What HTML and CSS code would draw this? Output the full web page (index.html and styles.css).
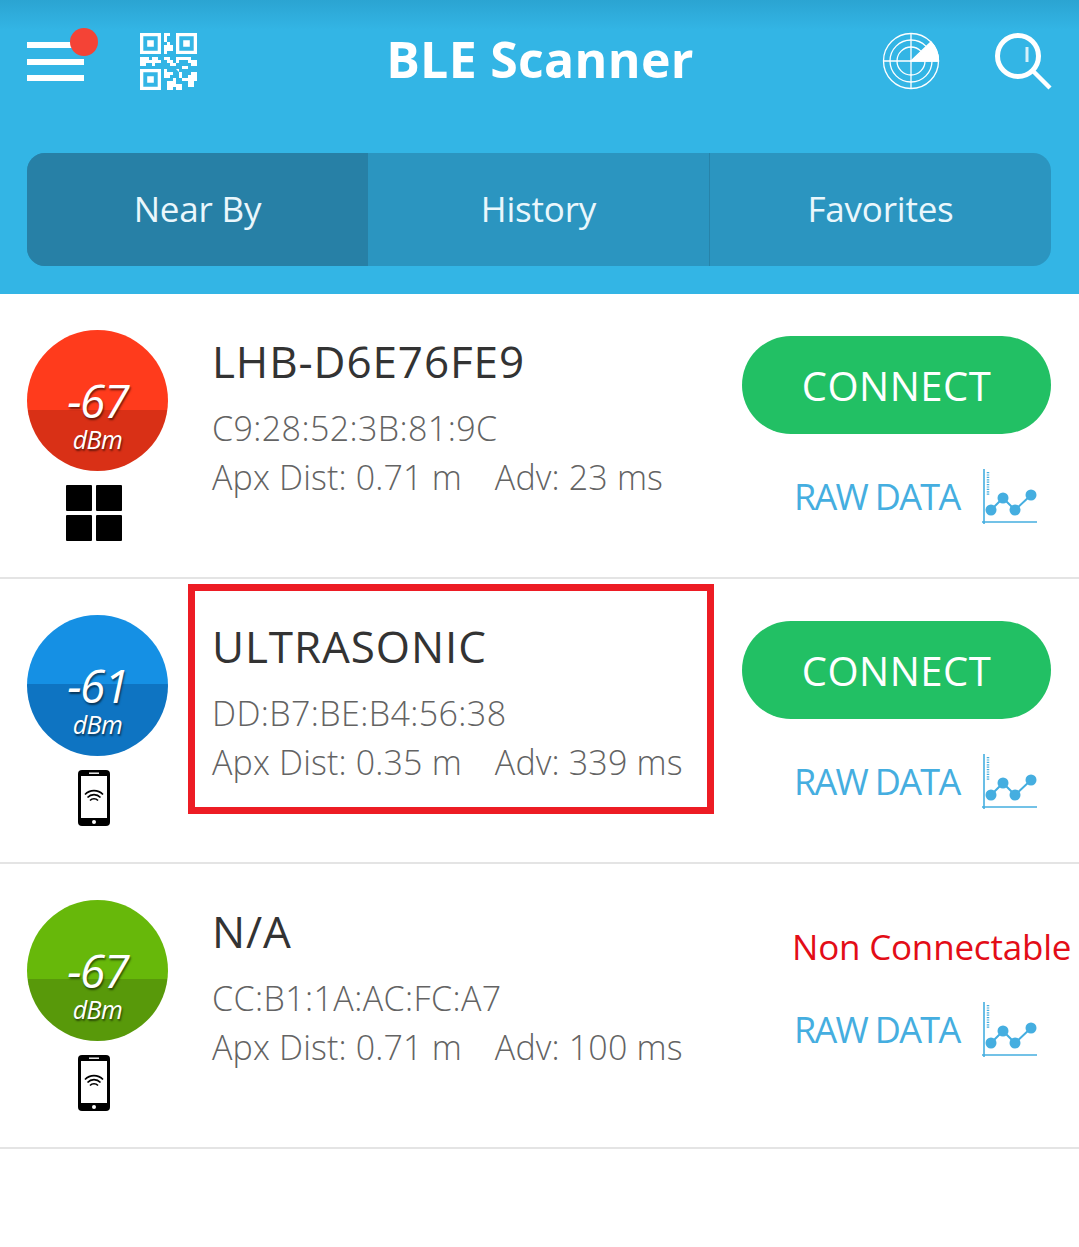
FILE: index.html

```html
<!DOCTYPE html>
<html lang="en">
<head>
  <meta charset="UTF-8">
  <meta name="viewport" content="width=device-width, initial-scale=1.0">
  <title>BLE Scanner</title>
  <link rel="stylesheet" href="styles.css">
</head>
<body>
  <svg class="defs" width="0" height="0">
    <symbol id="chart" viewBox="0 0 56 56">
      <path d="M3 0V55M1 53H56" stroke="#45aee0" stroke-width="1.6" fill="none"/>
      <path d="M7 3V26" stroke="#45aee0" stroke-width="2.5" stroke-dasharray="1.2 1.2" fill="none"/>
      <path d="M10 41L22 29L34 41L50 26" stroke="#45aee0" stroke-width="2" fill="none"/>
      <circle cx="10" cy="41" r="5.5" fill="#45aee0"/>
      <circle cx="22" cy="29" r="5.5" fill="#45aee0"/>
      <circle cx="34" cy="41" r="5.5" fill="#45aee0"/>
      <circle cx="50" cy="26" r="5.5" fill="#45aee0"/>
    </symbol>
    <symbol id="phone" viewBox="0 0 32 56">
      <rect width="32" height="56" rx="4" fill="#000"/>
      <rect x="3" y="6" width="26" height="42" fill="#fff"/>
      <rect x="11" y="2.5" width="10" height="1.4" fill="#fff"/>
      <circle cx="16" cy="52" r="2" fill="#fff"/>
      <path d="M7 24.5a12.5 12.5 0 0 1 18 0M9.5 27.5a9 9 0 0 1 13 0M12 30.5a5.500 5.500 0 0 1 8 0" stroke="#000" stroke-width="1.700" fill="none"/>
    </symbol>
  </svg>

  <header class="header">
    <div class="toolbar">
      <div class="menu-btn">
        <span class="bar"></span><span class="bar"></span><span class="bar"></span>
        <span class="dot"></span>
      </div>
      <svg class="qr" width="57" height="57" viewBox="0 0 19 19" fill="#fff">
        <path fill-rule="evenodd" d="M0 0h7v7H0zM1.100 1.100v4.800h4.800V1.100zM12 0h7v7h-7zM13.100 1.100v4.800h4.800V1.100zM0 12h7v7H0zM1.100 13.100v4.800h4.800v-4.800z"/>
        <path d="M2.400 2.400h2.200v2.200H2.400zM14.400 2.400h2.200v2.200h-2.200zM2.400 14.400h2.200v2.200H2.400z"/>
        <path d="M8 0h2v1H9v2h1v1h1v2H9v1H8V4h1V3H8zM0 8h3v1h1V8h2v1h1v1H5v1H4v-1H2v1H0zM8 8h2v1h1v1h1v1h-2v-1H9v-1H8zM12 8h5v1h2v2h-3v1h-2v-1h3v-1h-1V9h-3v1h-1zM8 12h1v1h2v1h-1v1H8zM12 12h1v1h1v2h2v-1h1v-1h2v3h-1v2h-2v-2h-2v-1h-1v-2zM9 16h2v-1h1v2h2v2h-2v-1h-1v1H9z"/>
      </svg>
      <h1 class="title">BLE Scanner</h1>
      <svg class="radar" width="58" height="58" viewBox="0 0 58 58" fill="none" stroke="#fff" stroke-width="1.300">
        <circle cx="29" cy="29" r="27.500"/>
        <circle cx="29" cy="29" r="21"/>
        <circle cx="29" cy="29" r="14"/>
        <path d="M29 1V57M1 29H57"/>
        <path d="M29 29L49 10A27.500 27.500 0 0 1 56.500 29Z" fill="#fff"/>
      </svg>
      <svg class="search" width="58" height="58" viewBox="0 0 58 58" fill="none" stroke="#fff">
        <circle cx="24" cy="24" r="20.500" stroke-width="5"/>
        <path d="M39 39L56 56" stroke-width="4.500"/>
        <path d="M33 15V30" stroke-width="3" opacity=".8"/>
      </svg>
    </div>
    <nav class="tabs">
      <div class="tab active">Near By</div>
      <div class="tab">History</div>
      <div class="tab last">Favorites</div>
    </nav>
  </header>

  <main>
    <section class="row">
      <div class="signal">
        <div class="rssi red"><span class="num">-67</span><span class="unit">dBm</span></div>
        <div class="win"><i></i><i></i><i></i><i></i></div>
      </div>
      <div class="info">
        <div class="name">LHB-D6E76FE9</div>
        <div class="addr">C9:28:52:3B:81:9C</div>
        <div class="meta"><span>Apx Dist: 0.71 m</span><span>Adv: 23 ms</span></div>
      </div>
      <div class="actions">
        <button class="connect">CONNECT</button>
        <div class="raw">RAW DATA <svg class="chart"><use href="#chart"/></svg></div>
      </div>
    </section>

    <section class="row">
      <div class="signal">
        <div class="rssi blue"><span class="num">-61</span><span class="unit">dBm</span></div>
        <svg class="phone"><use href="#phone"/></svg>
      </div>
      <div class="info">
        <div class="name">ULTRASONIC</div>
        <div class="addr">DD:B7:BE:B4:56:38</div>
        <div class="meta"><span>Apx Dist: 0.35 m</span><span>Adv: 339 ms</span></div>
      </div>
      <div class="actions">
        <button class="connect">CONNECT</button>
        <div class="raw">RAW DATA <svg class="chart"><use href="#chart"/></svg></div>
      </div>
      <div class="highlight"></div>
    </section>

    <section class="row">
      <div class="signal">
        <div class="rssi green"><span class="num">-67</span><span class="unit">dBm</span></div>
        <svg class="phone"><use href="#phone"/></svg>
      </div>
      <div class="info">
        <div class="name">N/A</div>
        <div class="addr">CC:B1:1A:AC:FC:A7</div>
        <div class="meta"><span>Apx Dist: 0.71 m</span><span>Adv: 100 ms</span></div>
      </div>
      <div class="actions">
        <div class="non-conn">Non Connectable</div>
        <div class="raw">RAW DATA <svg class="chart"><use href="#chart"/></svg></div>
      </div>
    </section>
  </main>
</body>
</html>
```

FILE: styles.css

```css
* {
  box-sizing: border-box;
}
body {
  margin: 0;
  font-family: "Open Sans", "Noto Sans", sans-serif;
  background-color: #fff;
  overflow: hidden;
}
.defs {
  position: absolute;
}
.header {
  height: 294px;
  padding: 31px 28px 0 27px;
  background: linear-gradient(#2ba4d2, #33b5e5 30px);
}
.toolbar {
  display: flex;
  align-items: flex-start;
  height: 122px;
}
.menu-btn {
  position: relative;
  width: 57px;
  padding-top: 11px;
  margin-right: 56px;
}
.bar {
  display: block;
  height: 6px;
  margin-bottom: 10.500px;
  background: #fff;
}
.dot {
  position: absolute;
  top: -3px;
  left: 43px;
  width: 28px;
  height: 28px;
  border-radius: 50%;
  background: #f44336;
}
.qr {
  margin: 2px 1px 0 0;
}
.title {
  flex: 1;
  margin: -3px 0 0;
  color: #fff;
  font-size: 50px;
  line-height: 62px;
  font-weight: 700;
  letter-spacing: 0.300px;
  text-align: center;
}
.radar {
  margin: 1px 54px 0 0;
}
.search {
  margin-top: 1px;
  margin-right: -1px;
}
.tabs {
  display: grid;
  grid-template-columns: 341px 341px 342px;
  height: 113px;
  border-radius: 18px;
  overflow: hidden;
  background: #2b95c0;
}
.tab {
  display: flex;
  align-items: center;
  justify-content: center;
  padding-bottom: 2px;
  color: #eaf7fc;
  font-size: 35px;
  font-weight: 400;
  letter-spacing: -0.200px;
}
.tab.active {
  background: #2780a6;
}
.tab.last {
  border-left: 1px solid #2783a9;
}
.row {
  position: relative;
  display: flex;
  height: 285px;
  padding: 36px 28px 0 27px;
  border-bottom: 2px solid #e4e4e4;
}
.signal {
  display: flex;
  flex-direction: column;
  align-items: center;
  width: 141px;
  margin-right: 44px;
}
.rssi {
  display: flex;
  flex-direction: column;
  align-items: center;
  width: 141px;
  height: 141px;
  border-radius: 50%;
  color: #fff;
  font-style: italic;
  text-shadow: 1px 2px 2px rgba(0, 0, 0, .55);
  padding-top: 45px;
}
.red {
  background: linear-gradient(#ff3b1c 57%, #d93016 57%);
}
.blue {
  background: linear-gradient(#1590e4 49%, #0e74c2 49%);
}
.green {
  background: linear-gradient(#67b80a 56%, #58990a 56%);
}
.num {
  font-size: 46px;
  line-height: 50px;
  letter-spacing: -1.500px;
}
.unit {
  font-size: 25px;
  line-height: 24px;
  margin-top: 2px;
  letter-spacing: -0.500px;
}
.win {
  display: grid;
  grid-template-columns: 26px 26px;
  gap: 4px;
  margin: 14px 8px 0 0;
}
.win i {
  height: 26px;
  background: #000;
  border-radius: 1px;
}
.phone {
  width: 32px;
  height: 56px;
  margin: 14px 8px 0 0;
}
.info {
  width: 530px;
  color: #636363;
}
.name {
  color: #333;
  font-size: 44px;
  line-height: 56px;
  margin-top: 3px;
  letter-spacing: 0.900px;
}
.addr {
  font-size: 34px;
  font-weight: 300;
  line-height: 46px;
  margin-top: 16px;
  letter-spacing: 0.400px;
}
.meta {
  display: flex;
  gap: 33px;
  font-size: 34px;
  font-weight: 300;
  line-height: 46px;
  margin-top: 3px;
  letter-spacing: 0.150px;
}
.actions {
  display: flex;
  flex-direction: column;
  width: 309px;
}
.connect {
  width: 309px;
  height: 98px;
  border: none;
  border-radius: 49px;
  margin: 6px 0 38px;
  background: #22c064;
  color: #fff;
  font-family: inherit;
  font-size: 40px;
  letter-spacing: 0.500px;
}
.non-conn {
  margin: 24px -20px 35px 50px;
  color: #e30d17;
  font-size: 35px;
  line-height: 46px;
  letter-spacing: -0.200px;
  white-space: nowrap;
}
.raw {
  display: flex;
  align-items: center;
  margin-left: 52px;
  margin-top: -3px;
  color: #45aee0;
  font-size: 36px;
  line-height: 56px;
  letter-spacing: -1.700px;
}
.chart {
  width: 56px;
  height: 56px;
  margin-left: 22px;
}
.highlight {
  position: absolute;
  top: 5px;
  left: 188px;
  width: 526px;
  height: 230px;
  border: 7px solid #ed1c24;
}
```
